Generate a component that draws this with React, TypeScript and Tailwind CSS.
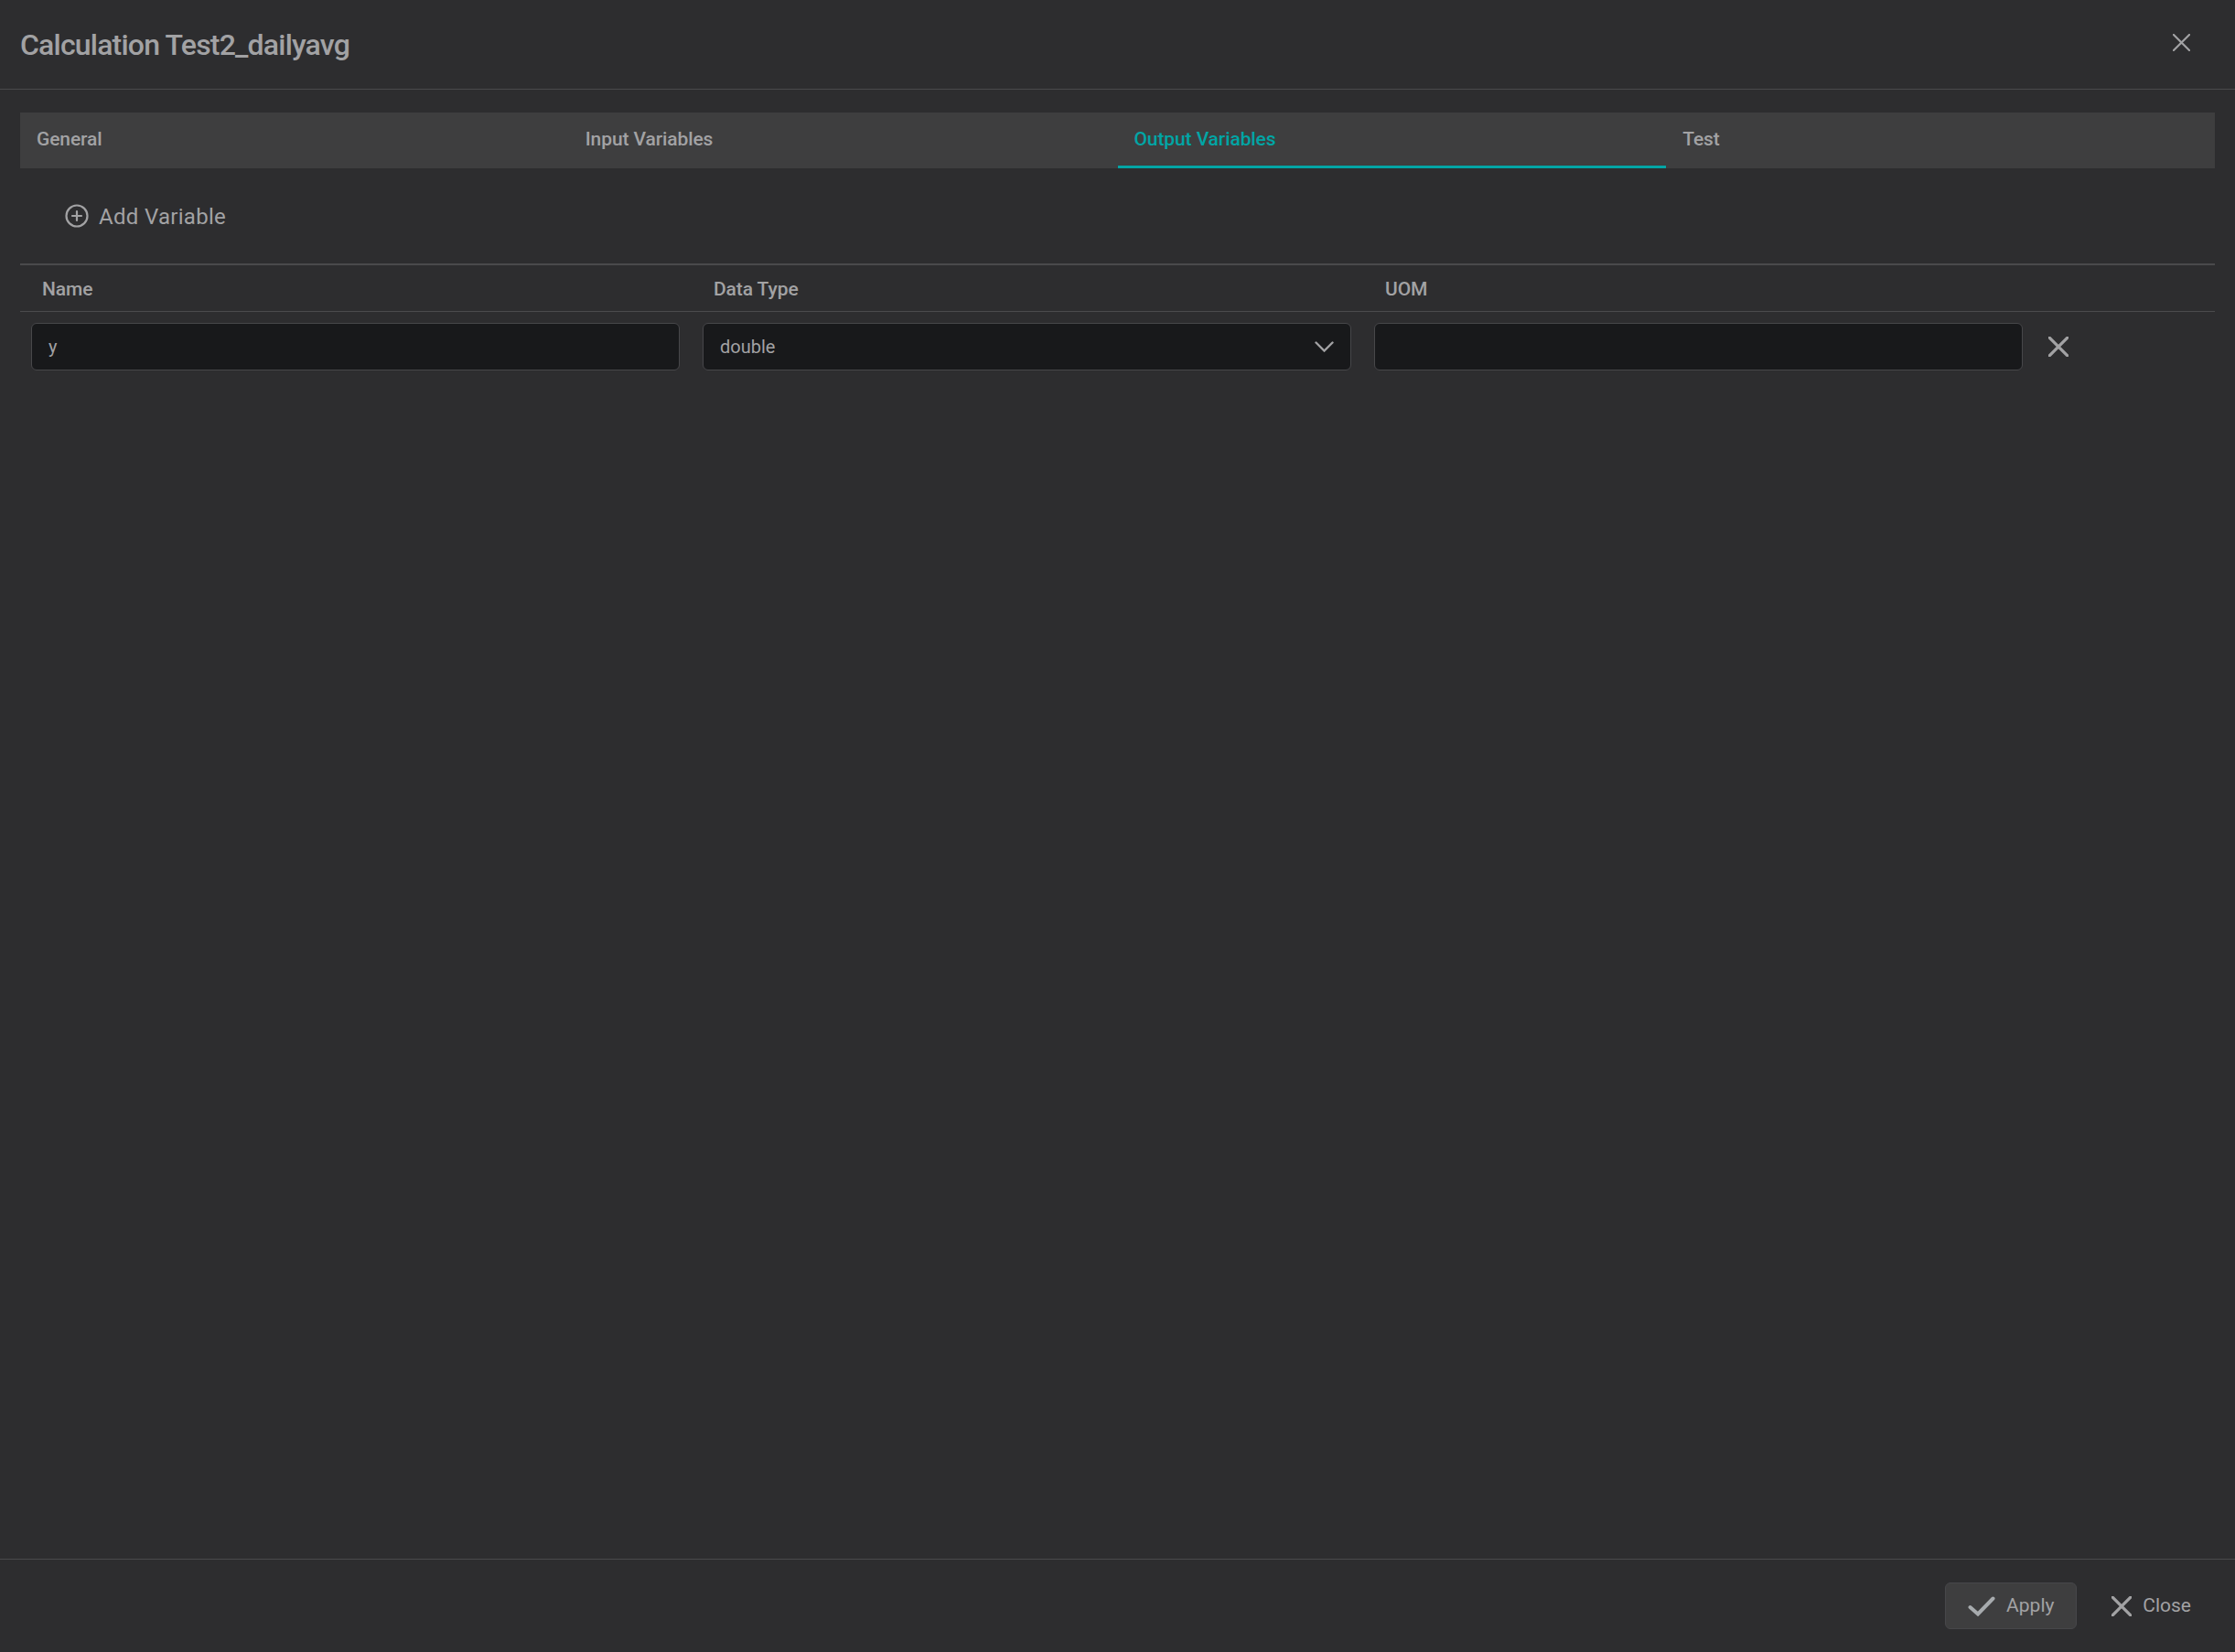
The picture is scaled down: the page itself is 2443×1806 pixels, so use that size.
import { useState } from "react";

const tabs = ["General", "Input Variables", "Output Variables", "Test"];
const columns = ["Name", "Data Type", "UOM"];

const CloseIcon = ({ className, strokeWidth = 2 }: { className: string; strokeWidth?: number }) => (
  <svg viewBox="0 0 20 20" className={className} fill="none" stroke="currentColor" strokeWidth={strokeWidth} strokeLinecap="round">
    <path d="M1 1L19 19M19 1L1 19" />
  </svg>
);

export default function App() {
  const [activeTab, setActiveTab] = useState("Output Variables");

  return (
    <div className="h-screen w-full flex flex-col bg-[#2d2d2f] text-[#a2a2a4] font-['Roboto',sans-serif]">
      <div className="h-[98px] shrink-0 flex justify-between items-start pl-[22px] pr-[49px] border-b border-[#4a4a4c]">
        <h1 className="mt-[29px] text-[32px] leading-[40px] font-medium tracking-[-0.8px]">Calculation Test2_dailyavg</h1>
        <button className="mt-[37px]">
          <CloseIcon className="w-[19px] h-[19px]" strokeWidth={2.3} />
        </button>
      </div>

      <div className="flex-1 flex flex-col px-[22px]">
        <div className="mt-[25px] h-[61px] grid grid-cols-4 bg-[#3e3e3f]">
          {tabs.map((tab) => (
            <button
              key={tab}
              onClick={() => setActiveTab(tab)}
              className={
                tab === activeTab
                  ? "flex items-center pl-[18px] pt-[1px] text-[21px] font-medium tracking-[-0.1px] text-left text-[#00a5a5] border-b-[3px] border-[#00a5a5]"
                  : "flex items-center pl-[18px] pt-[1px] text-[21px] font-medium tracking-[-0.1px] text-left border-b-[3px] border-transparent"
              }
            >
              {tab}
            </button>
          ))}
        </div>

        <div className="h-[104px] flex items-center pl-[49px]">
          <button className="flex items-center gap-[11px] text-[24px] tracking-[0.3px]">
            <svg viewBox="0 0 26 26" className="w-[26px] h-[26px]" fill="none" stroke="currentColor" strokeWidth={2.2}>
              <circle cx="13" cy="13" r="11.5" />
              <path d="M13 8V18M8 13H18" strokeLinecap="round" />
            </svg>
            <span className="pt-[1px]">Add Variable</span>
          </button>
        </div>

        <div className="border-t-2 border-[#4a4a4c]">
          <div className="h-[51px] grid grid-cols-[734px_734px_734px_1fr] items-center pt-[3px] border-b border-[#4a4a4c]">
            {columns.map((col) => (
              <div key={col} className="px-[24px] text-[21px] font-medium tracking-[-0.1px]">{col}</div>
            ))}
          </div>
          <div className="pt-[12px] grid grid-cols-[734px_734px_734px_1fr] items-center">
            <div className="pl-[12px] pr-[13px]">
              <div className="h-[52px] flex items-center px-[18px] text-[20px] bg-[#18191b] border border-[#47474a] rounded-[6px]">y</div>
            </div>
            <div className="pl-[12px] pr-[13px]">
              <div className="h-[52px] flex items-center justify-between px-[18px] text-[20px] bg-[#18191b] border border-[#47474a] rounded-[6px]">
                double
                <svg viewBox="0 0 21 12" className="w-[21px] h-[12px]" fill="none" stroke="currentColor" strokeWidth={2.4} strokeLinecap="round">
                  <path d="M1.5 1.5L10.5 10.5L19.5 1.5" />
                </svg>
              </div>
            </div>
            <div className="pl-[12px] pr-[13px]">
              <div className="h-[52px] bg-[#18191b] border border-[#47474a] rounded-[6px]" />
            </div>
            <div className="pl-[15px]">
              <CloseIcon className="w-[22px] h-[22px]" strokeWidth={3} />
            </div>
          </div>
        </div>
      </div>

      <div className="h-[102px] shrink-0 flex justify-end items-start pr-[48px] pt-[25px] gap-[38px] border-t border-[#4a4a4c] text-[21px]">
        <button className="w-[144px] h-[51px] flex items-center justify-center gap-[12px] pt-[1px] bg-[#3e3e3f] border border-[#47474a] rounded-[6px]">
          <svg viewBox="0 0 30 22" className="w-[30px] h-[22px]" fill="none" stroke="#a7abae" strokeWidth={4} strokeLinecap="round">
            <path d="M2.5 12L11 19.5L27.5 2.5" />
          </svg>
          Apply
        </button>
        <button className="h-[51px] flex items-center gap-[12px] pt-[1px]">
          <CloseIcon className="w-[22px] h-[22px]" strokeWidth={3} />
          Close
        </button>
      </div>
    </div>
  );
}
